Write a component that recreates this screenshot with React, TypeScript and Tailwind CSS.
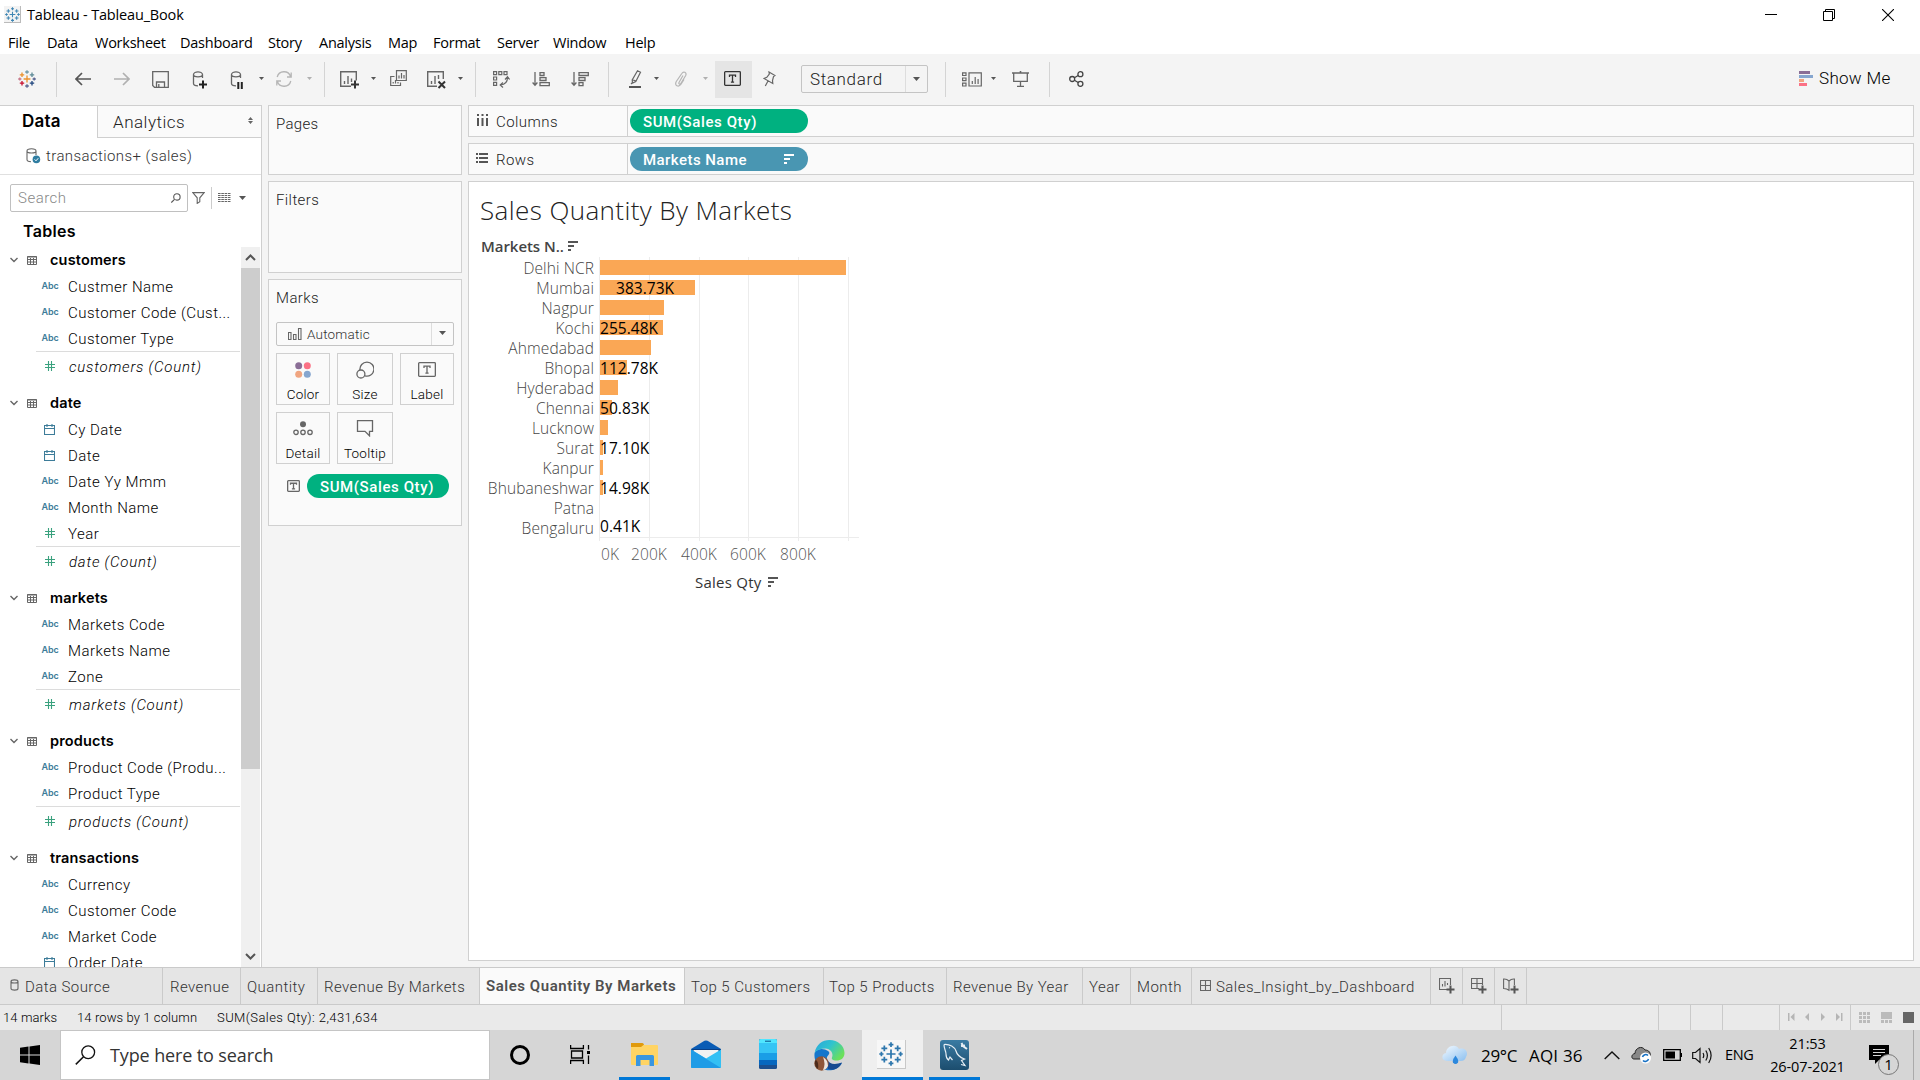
import type { ReactNode } from "react";

const UI = 'font-["Open_Sans","Noto_Sans",sans-serif]';

function Svg({ w, h, children, className = "" }: { w: number; h: number; children: ReactNode; className?: string }) {
  return (
    <svg width={w} height={h} viewBox={`0 0 ${w} ${h}`} fill="none" stroke="#666" strokeWidth="1.3" className={"shrink-0 " + className}>
      {children}
    </svg>
  );
}

function Caret({ color = "#555", s = 5 }: { color?: string; s?: number }) {
  return (
    <Svg w={s} h={Math.ceil(s / 2) + 1}>
      <path d={`M0 0H${s}L${s / 2} ${s / 2 + 0.6}Z`} fill={color} stroke="none" />
    </Svg>
  );
}

function Cell({ w, children, className = "" }: { w: string; children?: ReactNode; className?: string }) {
  return <div className={`flex shrink-0 items-center justify-center ${w} ${className}`}>{children}</div>;
}

function Sep({ w }: { w: string }) {
  return (
    <Cell w={w}>
      <div className="h-[35px] w-px shrink-0 bg-[#d4d4d4]" />
    </Cell>
  );
}

const crosses: [number, number, number, string][] = [
  [9, 9, 3.4, "#eb912c"],
  [4, 4.8, 2.2, "#eb912c"],
  [14, 4.8, 2.2, "#5c8a96"],
  [4, 13.2, 2.2, "#c8102e"],
  [14, 13.2, 2.2, "#1f457e"],
  [9, 2, 1.8, "#7199a6"],
  [9, 16, 1.8, "#5b6591"],
  [1.8, 9, 1.6, "#c7798b"],
  [16.2, 9, 1.6, "#5b6591"],
];

function TableauMark({ size, mono }: { size: number; mono?: string }) {
  return (
    <svg width={size} height={size} viewBox="0 0 18 18" fill="none" strokeWidth="1.3" className="shrink-0">
      {crosses.map(([x, y, r, c], i) => (
        <path key={i} d={`M${x - r} ${y}H${x + r}M${x} ${y - r}V${y + r}`} stroke={mono ?? c} />
      ))}
    </svg>
  );
}

function BoxT({ w = 18, h = 15, color = "#666" }: { w?: number; h?: number; color?: string }) {
  const c = w / 2;
  return (
    <Svg w={w} h={h}>
      <rect x=".65" y=".65" width={w - 1.3} height={h - 1.3} rx=".8" stroke={color} />
      <path d={`M${c - 3} ${h * 0.4}V${h * 0.27}H${c + 3}V${h * 0.4}M${c} ${h * 0.27}V${h * 0.74}M${c - 1.6} ${h * 0.74}H${c + 1.6}`} stroke={color} />
    </Svg>
  );
}

function SortIcon({ color = "#555" }: { color?: string }) {
  return (
    <svg width="10" height="10" className="shrink-0">
      <path d="M0 0H10V2H0ZM0 4H6V6H0ZM0 8H3V10H0Z" fill={color} />
    </svg>
  );
}

const menus: [string, string][] = [
  ["File", "w-[39px]"],
  ["Data", "w-[48px]"],
  ["Worksheet", "w-[85px]"],
  ["Dashboard", "w-[88px]"],
  ["Story", "w-[51px]"],
  ["Analysis", "w-[69px]"],
  ["Map", "w-[45px]"],
  ["Format", "w-[64px]"],
  ["Server", "w-[56px]"],
  ["Window", "w-[72px]"],
  ["Help", "w-[40px]"],
];

function TitleBar() {
  return (
    <header className={`h-[54px] bg-white text-black ${UI}`}>
      <div className="flex h-[29px] items-center">
        <div className="ml-[4px] flex h-[17px] w-[17px] items-center justify-center border-r border-b border-[#bbb] bg-[#f3f3f3]">
          <TableauMark size={15} mono="#3f86b4" />
        </div>
        <span className="ml-[6px] text-[14.5px] tracking-[-0.17px]">Tableau - Tableau_Book</span>
        <div className="flex-1" />
        <Svg w={12} h={12} className="mr-[46px]">
          <path d="M0 5.5H12" stroke="#000" strokeWidth="1" />
        </Svg>
        <Svg w={12} h={12} className="mr-[47px]">
          <path d="M.5 2.5H9.5V11.5H.5ZM2.5 2.5V.5H11.5V9.5H9.5" stroke="#000" strokeWidth="1" />
        </Svg>
        <Svg w={12} h={12} className="mr-[26px]">
          <path d="M0 0L12 12M12 0L0 12" stroke="#000" strokeWidth="1.1" />
        </Svg>
      </div>
      <nav className="flex h-[25px] items-center pt-[3px] pl-[8px] text-[14.5px] tracking-[-0.25px]">
        {menus.map(([m, w]) => (
          <span key={m} className={`shrink-0 whitespace-nowrap ${w}`}>
            {m}
          </span>
        ))}
      </nav>
    </header>
  );
}

function Cylinder() {
  return <path d="M1.5 3.5C1.5 1.8 4 .8 6 .8S10.5 1.8 10.5 3.5V7M1.5 3.5C1.5 5 4 5.8 6 5.8S10.5 5 10.5 3.5M1.5 3.5V12.5C1.5 14 3.5 14.8 6 14.8" />;
}

function Toolbar() {
  return (
    <div className="flex h-[50px] shrink-0 items-center bg-[#f4f4f4]">
      <Cell w="w-[54px]">
        <TableauMark size={18} />
      </Cell>
      <Sep w="w-[4px]" />
      <Cell w="w-[40px]" className="ml-[5px]">
        <Svg w={16} h={14}>
          <path d="M16 7H1M7 1L1 7L7 13" stroke="#555" strokeWidth="1.7" />
        </Svg>
      </Cell>
      <Cell w="w-[38px]">
        <Svg w={16} h={14}>
          <path d="M0 7H15M9 1L15 7L9 13" stroke="#b0b0b0" strokeWidth="1.7" />
        </Svg>
      </Cell>
      <Cell w="w-[40px]" className="pr-[1px]">
        <Svg w={17} h={17}>
          <path d="M.7 .7H16.3V16.3H2.5L.7 14.5ZM4.5 16V11H12.5V16M6.8 13V16" />
        </Svg>
      </Cell>
      <Cell w="w-[36px]">
        <Svg w={17} h={18} className="mt-[2px] ml-[2px]">
          <Cylinder />
          <path d="M7 13.5H15M11 9.5V17.5" stroke="#222" strokeWidth="2" />
        </Svg>
      </Cell>
      <Cell w="w-[42px]" className="pr-[1px]">
        <Svg w={17} h={18} className="mt-[2px] ml-[1px]">
          <Cylinder />
          <path d="M8.3 11V18M11.8 11V18" stroke="#222" strokeWidth="2" />
        </Svg>
      </Cell>
      <Cell w="w-[4px]">
        <Caret />
      </Cell>
      <Cell w="w-[42px]">
        <Svg w={18} h={16}>
          <path d="M2.2 6A7 7 0 0 1 15.6 5.5M15.8 10A7 7 0 0 1 2.4 10.5M16.2 1.5V6H12M1.8 14.5V10H6" stroke="#b5b5b5" />
        </Svg>
      </Cell>
      <Cell w="w-[8px]">
        <Caret color="#b0b0b0" />
      </Cell>
      <Sep w="w-[22px]" />
      <Cell w="w-[28px]">
        <Svg w={20} h={18} className="mt-[2px] ml-[1px]">
          <path d="M11 15.3H.7V.7H16.3V9.5M4.5 10V13M8 5V13M11.5 7.5V11" strokeWidth="1.4" />
          <path d="M11 13.5H19M15 9.5V17.5" stroke="#333" strokeWidth="2" />
        </Svg>
      </Cell>
      <Cell w="w-[20px]">
        <Caret />
      </Cell>
      <Cell w="w-[30px]" className="pb-[2px]">
        <Svg w={18} h={17} className="ml-[1px]">
          <path d="M6.5 .7H16.3V10.5H6.5ZM9 5.5V8.5M11.5 3V8.5M14 5V8.5M4.5 6.5H.7V15.5H10.5V12.5M3.2 12V13.5M5.5 10V13.5M8 12V13.5" strokeWidth="1.2" />
        </Svg>
      </Cell>
      <Cell w="w-[46px]">
        <Svg w={20} h={18} className="mt-[2px] ml-[1px]">
          <path d="M10 15.3H.7V.7H16.3V8M4.5 10V13M8 5V13M11.5 4V8" strokeWidth="1.4" />
          <path d="M11.5 10.5L18 17M18 10.5L11.5 17" stroke="#333" strokeWidth="2" />
        </Svg>
      </Cell>
      <Cell w="w-[2px]">
        <Caret />
      </Cell>
      <Sep w="w-[28px]" />
      <Cell w="w-[24px]">
        <Svg w={17} h={17}>
          <path d="M.6 .6H3.6V3.6H.6ZM5.8 .6H8.8V3.6H5.8ZM11 .6H14V3.6H11ZM.6 6H3.6V9H.6ZM.6 11.4H3.6V14.4H.6ZM14.5 6.5C14.5 11 12 13.5 7.5 14M12 8.5L14.5 5.8L16.6 8.5M10 11.5L7.2 14L10 16.5" strokeWidth="1.2" />
        </Svg>
      </Cell>
      <Cell w="w-[56px]">
        <Svg w={18} h={15}>
          <path d="M3 0V13M.6 10.5L3 13.2L5.4 10.5M8 .7H12V3.5H8ZM8 5.7H14V8.5H8ZM8 10.7H17.3V13.7H8Z" />
        </Svg>
      </Cell>
      <Cell w="w-[22px]">
        <Svg w={18} h={15}>
          <path d="M3 0V13M.6 10.5L3 13.2L5.4 10.5M8 .7H17.3V3.5H8ZM8 5.7H14V8.5H8ZM8 10.7H12V13.7H8Z" />
        </Svg>
      </Cell>
      <Sep w="w-[34px]" />
      <Cell w="w-[20px]">
        <Svg w={13} h={18}>
          <path d="M8.5 .8L11.5 2.3L6.8 11.5L3.5 13L3.2 10ZM3.5 9.5L7 11.3M2 14L4 12" strokeWidth="1.2" />
          <path d="M0 17H12" stroke="#555" strokeWidth="2" />
        </Svg>
      </Cell>
      <Cell w="w-[22px]">
        <Caret />
      </Cell>
      <Cell w="w-[28px]">
        <Svg w={14} h={16}>
          <path d="M9 4.5L5 11.5C4.2 13 6 13.8 6.8 12.5L11.7 4.5C13 1.5 9.5 -.3 7.8 2.5L2.3 10.5C.2 14.5 4.5 16.8 7 13.2L10 8.5" stroke="#b5b5b5" strokeWidth="1.2" />
        </Svg>
      </Cell>
      <Cell w="w-[20px]">
        <Caret color="#b0b0b0" />
      </Cell>
      <Cell w="w-[37px]" className="h-[37px] bg-[#e5e5e5] pr-[2px] pb-[1px]">
        <BoxT w={17} h={15} color="#333" />
      </Cell>
      <Cell w="w-[34px]">
        <Svg w={13} h={16}>
          <path d="M6 1L12 4.5L10.5 5.5L9.5 9.5L9.8 12.5L1 7.5L3.8 6.3L6.3 3ZM5 10L2.3 15" strokeWidth="1.2" />
        </Svg>
      </Cell>
      <div className="ml-[15px] flex h-[28px] w-[127px] shrink-0 items-center rounded-[2px] border border-[#c4c4c4]">
        <span className="w-[103px] shrink-0 pt-[2px] pl-[8px] font-[Roboto] text-[17px] font-light tracking-[0.65px] text-[#222]">Standard</span>
        <div className="flex h-full flex-1 items-center justify-center border-l border-[#ddd]">
          <Caret s={7} />
        </div>
      </div>
      <Sep w="w-[34px]" />
      <Cell w="w-[20px]">
        <Svg w={20} h={15}>
          <path d="M.6 .8H4V3.5H.6ZM.6 6H4V8.7H.6ZM.6 11.2H4V14H.6ZM7 .8H19.3V14H7ZM10.3 9V12M13.2 5V12M16.1 7V12" strokeWidth="1.2" />
        </Svg>
      </Cell>
      <Cell w="w-[22px]">
        <Caret />
      </Cell>
      <Cell w="w-[34px]" className="pr-[1px]">
        <Svg w={17} h={16}>
          <path d="M0 2H17M8.5 0V2" strokeWidth="1.6" />
          <path d="M1.7 2V10.4H15.3V2M8.5 10.4V15.2M5 15.3H12" />
        </Svg>
      </Cell>
      <Sep w="w-[22px]" />
      <Cell w="w-[32px]">
        <Svg w={15} h={16}>
          <circle cx="3.2" cy="8" r="2.5" stroke="#444" />
          <circle cx="11.4" cy="3.2" r="2.5" stroke="#444" />
          <circle cx="11.4" cy="12.8" r="2.5" stroke="#444" />
          <path d="M5.4 6.8L9.2 4.5M5.4 9.2L9.2 11.5" stroke="#444" />
        </Svg>
      </Cell>
      <div className="flex-1" />
      <svg width="14" height="15" className="mb-[1px] shrink-0">
        <path d="M0 0H11V3H0Z" fill="#8a6e96" />
        <path d="M0 4H14V7H0Z" fill="#86a6cf" />
        <path d="M0 8H5V11H0Z" fill="#f0a580" />
        <path d="M0 12H8V15H0Z" fill="#fb7185" />
      </svg>
      <span className="mr-[29px] ml-[6px] w-[72px] font-[Roboto] text-[17px] font-light tracking-[0.3px] whitespace-nowrap text-black">Show Me</span>
    </div>
  );
}

type Field = [kind: "abc" | "cal" | "num", name: string];
const tables: { name: string; fields: Field[]; count?: boolean }[] = [
  { name: "customers", fields: [["abc", "Custmer Name"], ["abc", "Customer Code (Cust..."], ["abc", "Customer Type"]], count: true },
  { name: "date", fields: [["cal", "Cy Date"], ["cal", "Date"], ["abc", "Date Yy Mmm"], ["abc", "Month Name"], ["num", "Year"]], count: true },
  { name: "markets", fields: [["abc", "Markets Code"], ["abc", "Markets Name"], ["abc", "Zone"]], count: true },
  { name: "products", fields: [["abc", "Product Code (Produ..."], ["abc", "Product Type"]], count: true },
  { name: "transactions", fields: [["abc", "Currency"], ["abc", "Customer Code"], ["abc", "Market Code"], ["cal", "Order Date"]] },
];

function FieldIcon({ kind }: { kind: string }) {
  return (
    <div className="ml-[40px] flex w-[20px] shrink-0 items-center justify-center">
      {kind === "abc" && <span className="font-[Inter] text-[9px] font-semibold tracking-[-0.1px] text-[#3d7c99]">Abc</span>}
      {kind === "cal" && (
        <Svg w={11} h={11} className="mr-px">
          <path d="M.5 1.5H10.5V10.5H.5ZM.5 4.5H10.5M3 0V3M8 0V3" stroke="#3d7c99" strokeWidth="1.1" />
        </Svg>
      )}
      {kind === "num" && (
        <Svg w={10} h={10}>
          <path d="M3.5 0V10M6.5 0V10M0 3.5H10M0 6.5H10" stroke="#3aa17e" strokeWidth="1.1" />
        </Svg>
      )}
    </div>
  );
}

function DataPane() {
  return (
    <aside className="flex h-[862px] w-[262px] shrink-0 flex-col overflow-hidden border-t border-r border-[#cfcfcf] bg-white font-[Roboto]">
      <div className="flex h-[32px] shrink-0">
        <div className="w-[97px] pl-[22px] font-[Inter] text-[17px] leading-[31px] font-semibold tracking-[0.2px] text-black">Data</div>
        <div className="flex flex-1 items-center justify-between border-b border-l border-[#cfcfcf] bg-[#fafafa] pr-[8px] pl-[15px] text-[17px] text-[#222]">
          <span className="pt-[2px] font-light tracking-[0.5px]">Analytics</span>
          <Svg w={5} h={7} className="mb-[2px]">
            <path d="M0 3L2.5 0L5 3ZM0 4L2.5 7L5 4Z" fill="#666" stroke="none" />
          </Svg>
        </div>
      </div>
      <div className="flex h-[37px] shrink-0 items-center border-b border-[#e0e0e0] pl-[26px]">
        <Svg w={15} h={16}>
          <path d="M1 3C1 1.5 3.2 .8 5.5 .8S10 1.5 10 3V7M1 3C1 4.5 3.2 5 5.5 5S10 4.5 10 3M1 3V11.5C1 13 2.5 13.7 5 13.7" strokeWidth="1.1" />
          <circle cx="10.4" cy="11.4" r="3.8" fill="#2f7da1" stroke="none" />
          <path d="M8.6 11.4L10 12.8L12.3 10.2" stroke="#fff" strokeWidth="1" />
        </Svg>
        <span className="ml-[5px] text-[15px] font-light tracking-[0.4px] text-[#333]">transactions+ (sales)</span>
      </div>
      <div className="mt-[9px] ml-[10px] flex h-[28px] shrink-0 items-center">
        <div className="flex h-[28px] w-[178px] items-center justify-between rounded-[2px] border border-[#c0c0c0] pr-[6px] pl-[7px]">
          <span className="text-[15px] font-light tracking-[0.5px] text-[#888]">Search</span>
          <Svg w={10} h={10}>
            <circle cx="5.9" cy="3.9" r="3.2" stroke="#555" strokeWidth="1.1" />
            <path d="M3.5 6.3L.3 9.6" stroke="#555" strokeWidth="1.1" />
          </Svg>
        </div>
        <Svg w={13} h={12} className="ml-[4px]">
          <path d="M.8 .6H12.2L7.8 5.8V9.8L5.2 11.4V5.8Z" strokeWidth="1.1" />
        </Svg>
        <div className="ml-[6px] h-[22px] w-px bg-[#ccc]" />
        <svg width="13" height="9" className="mb-[1px] ml-[6px]">
          <path d="M0 .5H13M0 2.5H13M0 4.5H13M0 6.5H13M0 8.5H13" stroke="#666" strokeWidth="1" strokeDasharray="2.6 .7" />
        </svg>
        <div className="ml-[8px]">
          <Caret s={7} />
        </div>
      </div>
      <div className="h-[35px] shrink-0 pl-[23px] font-[Inter] text-[16px] leading-[38px] font-semibold tracking-[0.3px] text-black">Tables</div>
      <div className="flex min-h-0 flex-1">
        <div className="w-[240px] overflow-hidden">
          {tables.map((t) => (
            <div key={t.name} className={t.count ? "mb-[10px]" : ""}>
              <div className="flex h-[26px] items-center">
                <Svg w={8} h={6} className="ml-[10px]">
                  <path d="M.5 1L4 4.5L7.5 1" strokeWidth="1.4" />
                </Svg>
                <Svg w={10} h={9} className="mt-[1px] ml-[9px]">
                  <path d="M.5 .5H9.5V8.5H.5ZM0 1H10M.5 3.5H9.5M.5 6H9.5M3.5 2V8.5M6.5 2V8.5" strokeWidth="1" />
                </Svg>
                <span className="ml-[13px] font-[Inter] text-[14.5px] font-semibold tracking-[0.16px] text-black">{t.name}</span>
              </div>
              {t.fields.map(([k, n]) => (
                <div key={n} className="flex h-[26px] items-center">
                  <FieldIcon kind={k} />
                  <span className="ml-[8px] pt-[2px] text-[15px] font-light tracking-[0.47px] whitespace-nowrap text-black">{n}</span>
                </div>
              ))}
              {t.count && (
                <div>
                  <div className="ml-[36px] h-px bg-[#dcdcdc]" />
                  <div className="flex h-[28px] items-center">
                    <FieldIcon kind="num" />
                    <span className="ml-[9px] pt-[2px] text-[15px] font-light tracking-[0.77px] text-black italic">{t.name} (Count)</span>
                  </div>
                </div>
              )}
            </div>
          ))}
        </div>
        <div className="ml-[1px] flex w-[19px] flex-col items-center justify-between bg-[#f0f0f0]">
          <div className="flex h-[21px] items-center">
            <Svg w={11} h={7}>
              <path d="M1 6L5.5 1.5L10 6" stroke="#555" strokeWidth="2" />
            </Svg>
          </div>
          <div className="h-[501px] w-full bg-[#cdcdcd]" />
          <div className="flex flex-1 items-end pb-[7px]">
            <Svg w={11} h={7}>
              <path d="M1 1L5.5 5.5L10 1" stroke="#555" strokeWidth="2" />
            </Svg>
          </div>
        </div>
      </div>
    </aside>
  );
}

function MarkButton({ label, w, children }: { label: string; w: string; children: ReactNode }) {
  return (
    <div className={`flex h-[52px] flex-col items-center border border-[#d0d0d0] bg-[#fafafa] ${w}`}>
      <div className="flex h-[32px] items-center">{children}</div>
      <span className="text-[13.5px] leading-[17px] font-light tracking-[0.25px] text-black">{label}</span>
    </div>
  );
}

function Cards() {
  return (
    <section className="ml-[6px] flex w-[194px] shrink-0 flex-col gap-[6px] font-[Roboto] text-[15px] font-light text-[#222]">
      <div className="h-[70px] border border-[#d0d0d0] bg-[#fafafa] px-[7px] pt-[7px] tracking-[0.3px]">Pages</div>
      <div className="h-[92px] border border-[#d0d0d0] bg-[#fafafa] px-[7px] pt-[7px] tracking-[0.4px]">Filters</div>
      <div className="h-[247px] border border-[#d0d0d0] bg-[#fafafa] px-[7px] pt-[7px]">
        <div className="tracking-[0.4px]">Marks</div>
        <div className="mt-[12px] flex h-[24px] w-[178px] items-center rounded-[2px] border border-[#c4c4c4]">
          <Svg w={14} h={12} className="ml-[11px]">
            <path d="M.5 4.5H3V11.5H.5ZM5.5 6.5H8V11.5H5.5ZM10.5 .5H13V11.5H10.5Z" strokeWidth="1.1" />
          </Svg>
          <span className="ml-[5px] flex-1 pt-[1px] text-[13.5px] tracking-[0.2px] text-[#333]">Automatic</span>
          <div className="flex h-full w-[22px] items-center justify-center border-l border-[#ddd]">
            <Caret s={7} />
          </div>
        </div>
        <div className="mt-[7px] flex flex-wrap gap-x-[7px] gap-y-[7px]">
          <MarkButton label="Color" w="w-[54px]">
            <svg width="16" height="16">
              <circle cx="3.7" cy="3.7" r="3.5" fill="#8a6e96" />
              <circle cx="12.3" cy="3.7" r="3.5" fill="#fb7185" />
              <circle cx="3.7" cy="12.3" r="3.5" fill="#f0a580" />
              <circle cx="12.3" cy="12.3" r="3.5" fill="#86a6cf" />
            </svg>
          </MarkButton>
          <MarkButton label="Size" w="w-[56px]">
            <Svg w={18} h={18}>
              <path d="M4 9A7 7 0 1 1 9 14.8" />
              <circle cx="4.9" cy="13" r="4" />
            </Svg>
          </MarkButton>
          <MarkButton label="Label" w="w-[54px]">
            <BoxT w={18} h={15} />
          </MarkButton>
          <MarkButton label="Detail" w="w-[54px]">
            <Svg w={20} h={15}>
              <circle cx="10" cy="3.3" r="3" fill="#666" stroke="none" />
              <circle cx="3" cy="11.3" r="2.2" />
              <circle cx="10" cy="11.3" r="2.2" />
              <circle cx="17" cy="11.3" r="2.2" />
            </Svg>
          </MarkButton>
          <MarkButton label="Tooltip" w="w-[56px]">
            <Svg w={18} h={17}>
              <path d="M1.5 .7H16.5V11.3H13.5V15.8L9 11.3H1.5Z" />
            </Svg>
          </MarkButton>
        </div>
        <div className="mt-[10px] flex items-center pl-[11px]">
          <BoxT w={13} h={12} />
          <div className="ml-[7px] h-[24px] w-[142px] rounded-full bg-[#00b180] pl-[13px] text-[15px] leading-[26px] font-medium tracking-[0.6px] text-white">SUM(Sales Qty)</div>
        </div>
      </div>
    </section>
  );
}

function Shelf({ label, icon, children }: { label: string; icon: ReactNode; children: ReactNode }) {
  return (
    <div className="flex h-[32px] shrink-0 items-center border border-[#d0d0d0] bg-[#fafafa]">
      <div className="flex h-full w-[159px] items-center border-r border-[#d0d0d0] pl-[7px]">
        <div className="w-[13px]">{icon}</div>
        <span className="ml-[7px] pt-[2px] text-[15px] font-light tracking-[0.45px] text-[#222]">{label}</span>
      </div>
      {children}
    </div>
  );
}

const markets: { name: string; bar: number; label?: string }[] = [
  { name: "Delhi NCR", bar: 246 },
  { name: "Mumbai", bar: 95, label: "383.73K" },
  { name: "Nagpur", bar: 64 },
  { name: "Kochi", bar: 63, label: "255.48K" },
  { name: "Ahmedabad", bar: 51 },
  { name: "Bhopal", bar: 27, label: "112.78K" },
  { name: "Hyderabad", bar: 18 },
  { name: "Chennai", bar: 12, label: "50.83K" },
  { name: "Lucknow", bar: 8 },
  { name: "Surat", bar: 3, label: "17.10K" },
  { name: "Kanpur", bar: 3 },
  { name: "Bhubaneshwar", bar: 3, label: "14.98K" },
  { name: "Patna", bar: 0 },
  { name: "Bengaluru", bar: 0, label: "0.41K" },
];

function Viz() {
  return (
    <div className="flex-1 border border-[#d0d0d0] bg-white font-['Open_Sans']">
      <h1 className="mt-[9px] h-[37px] pl-[11px] text-[26px] leading-[38px] font-light tracking-[0.4px] text-[#222]">Sales Quantity By Markets</h1>
      <div className="mt-[7px] flex h-[21px] items-center pt-[1px] pl-[12px] text-[15px] font-semibold text-[#444]">
        <span className="w-[87px] tracking-[-0.05px] whitespace-nowrap">Markets N..</span>
        <SortIcon />
      </div>
      <div className="relative h-[285px] w-[400px]">
        <svg width="400" height="285" className="absolute top-0 left-0" shapeRendering="crispEdges">
          <path d="M130.5 1V285M180.5 1V285M230.5 1V285M279.5 1V285M329.5 1V285M379.5 1V285M130 281.5H390" stroke="#ececec" />
        </svg>
        <div className="relative pt-[1px]">
          {markets.map((m) => (
            <div key={m.name} className="flex h-[20px] items-center">
              <span className="w-[125px] shrink-0 pt-[2px] text-right text-[15.5px] leading-[18px] font-light tracking-[0.1px] whitespace-nowrap text-[#444]">{m.name}</span>
              <div className="relative ml-[6px] flex h-[20px] items-center">
                <div className="h-[15px] bg-[#faa755]" style={{ width: m.bar }} />
                {m.label && (
                  <span
                    className={`absolute left-0 text-[15.5px] leading-[20px] font-medium tracking-[0.04px] whitespace-nowrap text-black ${m.name === "Mumbai" ? "pl-[16px]" : ""} ${m.bar ? "top-px" : "top-[-1px]"}`}
                  >
                    {m.label}
                  </span>
                )}
              </div>
            </div>
          ))}
        </div>
      </div>
      <div className="mt-[3px] flex h-[22px] items-center pl-[132px] text-[15.5px] font-light tracking-[0.1px] whitespace-nowrap text-[#555]">
        <span className="w-[30px]">0K</span>
        <span className="w-[50px]">200K</span>
        <span className="w-[49px]">400K</span>
        <span className="w-[50px]">600K</span>
        <span className="w-[50px]">800K</span>
      </div>
      <div className="mt-[5px] flex h-[22px] items-center pl-[226px] text-[15px] font-medium tracking-[0.25px] text-[#333]">
        <span className="w-[73px]">Sales Qty</span>
        <SortIcon />
      </div>
    </div>
  );
}

function Workspace() {
  return (
    <main className="ml-[6px] flex h-[856px] w-[1446px] shrink-0 flex-col gap-[6px] font-[Roboto]">
      <Shelf
        label="Columns"
        icon={
          <svg width="11" height="13" className="mb-[2px] ml-px">
            <path d="M1 0V2M1 4V12M5.5 0V2M5.5 4V12M10 0V2M10 4V12" stroke="#555" strokeWidth="2" />
          </svg>
        }
      >
        <div className="ml-[2px] h-[24px] w-[178px] rounded-full bg-[#00b180] pl-[13px] text-[15px] leading-[26px] font-medium tracking-[0.6px] text-white">SUM(Sales Qty)</div>
      </Shelf>
      <Shelf
        label="Rows"
        icon={
          <svg width="12" height="10" className="mb-[2px]">
            <path d="M0 1H2M3 1H12M0 5H2M3 5H12M0 9H2M3 9H12" stroke="#555" strokeWidth="2" />
          </svg>
        }
      >
        <div className="ml-[2px] flex h-[24px] w-[178px] items-center justify-between rounded-full bg-[#4996b2] pr-[14px] pl-[13px] text-[15px] font-medium tracking-[0.45px] text-white">
          <span className="pt-[2px]">Markets Name</span>
          <SortIcon color="#fff" />
        </div>
      </Shelf>
      <Viz />
    </main>
  );
}

const tabs: [string, string, string][] = [
  ["Revenue", "w-[78px]", "pl-[7px]"],
  ["Quantity", "w-[77px]", "pl-[6px]"],
  ["Revenue By Markets", "w-[162px]", "pl-[6px]"],
  ["Sales Quantity By Markets", "w-[205px]", "pl-[6px]"],
  ["Top 5 Customers", "w-[139px]", "pl-[6px]"],
  ["Top 5 Products", "w-[123px]", "pl-[5px]"],
  ["Revenue By Year", "w-[136px]", "pl-[6px]"],
  ["Year", "w-[48px]", "pl-[6px]"],
  ["Month", "w-[61px]", "pl-[6px]"],
];

const newSheetIcons = [
  "M8 11.5H.5V.5H11.5V7M3.5 6V8.5M6 3V8.5M8.5 5V7",
  "M8 10.5H.5V.5H11.5V7M6 .5V10.5M.5 5.5H11.5",
  "M6 3C4.5 1.5 2.5 .8 .6 1V10.5C2.5 10.5 4.5 11 6 12.2V3C7.5 1.5 9.5 .8 11.4 1V7",
];

function SheetTabs() {
  return (
    <div className="flex h-[38px] shrink-0 items-stretch border-t border-b border-[#cacaca] bg-[#e5e5e5] font-[Roboto] text-[15px] font-light tracking-[0.43px] text-[#333]">
      <div className="flex w-[163px] items-center border-r border-[#cacaca] pl-[10px]">
        <Svg w={9} h={12} className="mb-[2px]">
          <path d="M1 2.5C1 .3 8 .3 8 2.5V9.5C8 11.7 1 11.7 1 9.5ZM1 2.5C1 4.5 8 4.5 8 2.5" strokeWidth="1.1" />
        </Svg>
        <span className="ml-[6px] pt-[2px]">Data Source</span>
      </div>
      {tabs.map(([t, w, p]) => (
        <div
          key={t}
          className={`flex shrink-0 items-center border-r border-[#cacaca] whitespace-nowrap ${w} ${p} ${t.startsWith("Sales") ? "bg-[#fafafa] font-semibold tracking-[0.54px] text-[#505050]" : "pt-[2px]"}`}
        >
          {t}
        </div>
      ))}
      <div className="flex w-[239px] items-center border-r border-[#cacaca] pl-[8px]">
        <Svg w={11} h={11} className="mb-[2px]">
          <path d="M.5 .5H10.5V10.5H.5ZM5.5 .5V10.5M.5 5.5H10.5" strokeWidth="1.1" />
        </Svg>
        <span className="ml-[5px] pt-[2px] tracking-[0.46px]">Sales_Insight_by_Dashboard</span>
      </div>
      {newSheetIcons.map((d) => (
        <div key={d} className="flex w-[32px] items-center justify-center border-r border-[#cacaca]">
          <Svg w={16} h={16}>
            <path d={d} strokeWidth="1.1" />
            <path d="M7.5 11.5H15.5M11.5 7.5V15.5" stroke="#555" strokeWidth="2" />
          </Svg>
        </div>
      ))}
    </div>
  );
}

function StatusBar() {
  const line = "h-full border-l border-[#cacaca]";
  return (
    <div className="flex h-[25px] shrink-0 items-center bg-[#eaeaea] pl-[3px] font-[Roboto] text-[13px] font-light tracking-[0.1px] whitespace-nowrap text-black">
      <span className="w-[74px]">14 marks</span>
      <span className="w-[140px]">14 rows by 1 column</span>
      <span className="w-[1284px] tracking-[0.42px]">SUM(Sales Qty): 2,431,634</span>
      <div className={`w-[157px] ${line}`} />
      <div className={`w-[32px] ${line}`} />
      <div className={`w-[32px] ${line}`} />
      <div className={`w-[57px] ${line}`} />
      <div className={`flex w-[71px] items-center pl-[8px] ${line}`}>
        <svg width="56" height="9">
          <path d="M0 0H1.5V8H0ZM6.5 0V8L2.5 4ZM21 0V8L17 4ZM33 0V8L37 4ZM48 0V8L52 4ZM53 0H54.5V8H53Z" fill="#b5b5b5" />
        </svg>
      </div>
      <div className={`flex w-[70px] items-center pb-[1px] pl-[8px] ${line}`}>
        <svg width="56" height="11">
          <path d="M0 0H3V3H0ZM4 0H7V3H4ZM8 0H11V3H8ZM0 4H3V7H0ZM4 4H7V7H4ZM8 4H11V7H8ZM0 8H3V11H0ZM4 8H7V11H4ZM8 8H11V11H8ZM22 0H33V7H22ZM22 8H25V11H22ZM26 8H29V11H26ZM30 8H33V11H30Z" fill="#bbb" />
          <path d="M44 0H55V11H44Z" fill="#666" />
        </svg>
      </div>
    </div>
  );
}

function AppSlot({ w, active, open, children }: { w: string; active?: boolean; open?: boolean; children: ReactNode }) {
  return (
    <div className={`flex h-[50px] shrink-0 flex-col items-center ${w} ${active ? "bg-[#efefef]" : ""}`}>
      <div className="flex h-[47px] items-center">{children}</div>
      {(active || open) && <div className={`h-[3px] bg-[#0078d7] ${active ? "w-full" : "w-[51px]"}`} />}
    </div>
  );
}

function Taskbar() {
  return (
    <footer className={`flex h-[50px] shrink-0 items-start bg-[#d6d6d6] text-black ${UI}`}>
      <div className="flex h-full w-[60px] items-center justify-center">
        <svg width="20" height="20">
          <path d="M0 2.8L8.5 1.6V9.5H0ZM9.5 1.4L20 0V9.5H9.5ZM0 10.5H8.5V18.4L0 17.2ZM9.5 10.5H20V20L9.5 18.6Z" fill="#000" />
        </svg>
      </div>
      <div className="flex h-[50px] w-[430px] items-center border border-[#c5c5c5] bg-white pl-[14px]">
        <Svg w={21} h={20}>
          <circle cx="13.2" cy="7.2" r="6.4" stroke="#111" />
          <path d="M8.5 11.8L.8 19.4" stroke="#111" strokeWidth="1.5" />
        </Svg>
        <span className="ml-[14px] text-[18px] tracking-[-0.12px] text-[#333]">Type here to search</span>
      </div>
      <AppSlot w="w-[60px]">
        <div className="mt-[3px] h-[20px] w-[20px] rounded-full border-[3px] border-black" />
      </AppSlot>
      <AppSlot w="w-[60px]">
        <Svg w={21} h={19} className="mt-[2px]">
          <path d="M.6 0V3.5H13.4V0M.6 19V15.5H13.4V19M1.5 6H12.5V13H1.5ZM18.5 0V4.5M18.5 10.5V19" stroke="#000" />
          <path d="M17 6H20V9H17Z" fill="#000" stroke="none" />
        </Svg>
      </AppSlot>
      <AppSlot w="w-[69px]" open>
        <svg width="27" height="23" className="mt-[1px] mr-[1px]">
          <path d="M0 0H11.5Q13 .3 13 2V4H0Z" fill="#e09a0c" />
          <path d="M0 4H10L12.500 2H26Q27 2 27 3V21Q27 22 26 22H1Q0 22 0 21Z" fill="#ffd464" />
          <path d="M5 23V13.500Q5 12 6.500 12H21.500Q23 12 23 13.500V23H18.500V17H9.500V23Z" fill="#3a96e0" />
        </svg>
      </AppSlot>
      <AppSlot w="w-[54px]">
        <svg width="30" height="28" className="mt-[1px]">
          <path d="M0 9L13.500 .8Q15 0 16.500 .8L30 9V12H0Z" fill="#0a5cb5" />
          <path d="M0 9H30V12H0Z" fill="#0b3f85" />
          <path d="M2.500 10H27.500V14L15 20L2.500 14Z" fill="#f2f2f2" />
          <path d="M0 9.500L15 18.500L30 9.500V27Q30 28 29 28H1Q0 28 0 27Z" fill="#33c0f4" />
          <path d="M0 9.500L30 28H1Q0 28 0 27Z" fill="#1f9ce6" />
        </svg>
      </AppSlot>
      <AppSlot w="w-[70px]">
        <svg width="18" height="30">
          <rect width="18" height="30" rx="1.5" fill="#1b4f8f" />
          <path d="M0 4H18V14H0Z" fill="#36c5f5" />
          <path d="M0 14H18V21H0Z" fill="#1a9ee6" />
          <path d="M0 21H18V26H0Z" fill="#0667bf" />
          <path d="M0 4V1.5Q0 0 1.5 0H16.5Q18 0 18 1.5V4Z" fill="#50e6ff" />
          <path d="M6 2.2H12" stroke="#0a4f8a" />
        </svg>
      </AppSlot>
      <AppSlot w="w-[54px]">
        <svg width="31" height="31" className="mt-[3px] mr-[2px]">
          <defs>
            <linearGradient id="edgeTop" x1="0" y1="0" x2="1" y2=".6">
              <stop offset="0" stopColor="#2aa5dc" />
              <stop offset=".5" stopColor="#2fc3cf" />
              <stop offset="1" stopColor="#6be05a" />
            </linearGradient>
          </defs>
          <path d="M.6 13C3 8 10 8 14 11C17 13 14 15 13 17C12 24 19 27 28 23C24 30 17 31 12 30C4 28-.5 21 .6 13Z" fill="#1576cc" />
          <path d="M.6 13C2 4.500 8.500 0 15.500 0C24 0 30.500 6 30.500 13C30.500 18 27 20.500 22.500 20.500C18.500 20.500 17.200 19 18 17.500C20 13 16 8.500 11.500 8.500C6.500 8.500 2.500 10 .6 13Z" fill="url(#edgeTop)" />
          <path d="M13 19C15 24.500 21 25 28 22.500C25 29 19 31 14 29Z" fill="#164a91" />
          <circle cx="7.500" cy="23.500" r="7.200" fill="#8f5638" />
          <path d="M9 17Q14 20 14 26Q12 30 9 30Q12 24 9 17Z" fill="#ece6df" />
          <path d="M2 20Q5 22 4 29Q0 26 1 21Z" fill="#4d2b1b" />
        </svg>
      </AppSlot>
      <div className="w-[5px]" />
      <AppSlot w="w-[61px]" active>
        <div className="mt-[2px] mr-[2px] flex h-[29px] w-[29px] items-center justify-center border-r border-b border-[#c8c8c8] bg-[#f7f7f7]">
          <TableauMark size={24} mono="#2e77ad" />
        </div>
      </AppSlot>
      <AppSlot w="w-[63px]" open>
        <svg width="29" height="30" className="mt-[2px]" fill="none" stroke="#e6eef4">
          <defs>
            <linearGradient id="wb" x1="0" y1="0" x2="0" y2="1">
              <stop offset="0" stopColor="#3a7ba3" />
              <stop offset="1" stopColor="#1c4d6e" />
            </linearGradient>
          </defs>
          <rect width="29" height="30" rx="3" fill="url(#wb)" stroke="none" />
          <path d="M4 4.5C10 4 14.5 7 16 11C17 15 19 17 24.5 19L21.5 20.5L25 25.5L21 24.5M4 4.5C4 9 6 11 6 14C6 17 7 19 8.5 20L10 17L12.5 20M9 7.5L10 8" strokeWidth="1.2" />
          <path d="M21.5 3L23 6L27 9M21 6L25 5.5" strokeWidth="2" />
        </svg>
      </AppSlot>
      <div className="flex-1" />
      <div className="flex h-full w-[471px] items-center whitespace-nowrap">
        <svg width="26" height="20" className="ml-[-7px] shrink-0">
          <defs>
            <linearGradient id="cloud" x1="0" y1="0" x2="1" y2="1">
              <stop offset="0" stopColor="#f4faff" />
              <stop offset="1" stopColor="#8cc0f0" />
            </linearGradient>
          </defs>
          <path d="M5 16C-1 16-1 9 4 8C4 1 14-2 17 4C23 2 27 7 24 12C23 15 21 16 19 16Z" fill="url(#cloud)" />
          <path d="M13.5 10.5Q17 15 16 17.5Q13.5 20.5 11 17.5Q10 15 13.5 10.5Z" fill="#2c88dd" />
        </svg>
        <span className="ml-[13px] w-[48px] shrink-0 pt-[1px] text-[17px] tracking-[-0.3px]">29°C</span>
        <span className="w-[75px] shrink-0 pt-[1px] text-[17px] tracking-[0.2px]">AQI 36</span>
        <Svg w={16} h={9}>
          <path d="M.7 8L8 1L15.3 8" stroke="#111" strokeWidth="1.4" />
        </Svg>
        <svg width="22" height="18" className="ml-[11px] shrink-0">
          <path d="M3 13C0 13 0 8 4 7.5C4 2 11-1 14 4C18 4 20 7 19 10L11 13Z" fill="#888" stroke="#222" />
          <circle cx="14.5" cy="12" r="5.5" fill="#fff" />
          <path d="M11.5 11A3.3 3.3 0 0 1 17 9.5M17.5 13A3.3 3.3 0 0 1 12 14.5" stroke="#1570c4" strokeWidth="1.6" fill="none" />
        </svg>
        <svg width="19" height="12" className="ml-[10px] shrink-0">
          <path d="M.7 .7H17.3V11.3H.7Z" fill="none" stroke="#000" strokeWidth="1.3" />
          <path d="M2.5 2.5H12V9.5H2.5ZM17.5 4H19V8H17.5Z" fill="#000" />
        </svg>
        <Svg w={21} h={17} className="ml-[10px]">
          <path d="M.7 5.5H3.5L8 1.5V15.5L3.5 11.5H.7ZM11 6Q12.5 8.5 11 11M13.8 3.5Q17 8.5 13.8 13.5M16.7 1Q21.5 8.5 16.7 16" stroke="#111" strokeWidth="1.2" />
        </Svg>
        <span className="ml-[12px] w-[44px] shrink-0 text-[14.5px] tracking-[-0.3px]">ENG</span>
        <div className="w-[77px] shrink-0 text-center text-[14.5px] leading-[23px] tracking-[-0.1px]">
          <div>21:53</div>
          <div>26-07-2021</div>
        </div>
        <div className="relative ml-[23px] h-[50px] w-[45px] shrink-0 border-r border-[#aaa]">
          <svg width="20" height="19" className="absolute top-[15px] left-0">
            <path d="M0 0H20V15H10L6 19V15H0Z" fill="#000" />
            <path d="M4 4.5H16M4 7.5H16M4 10.5H12" stroke="#d6d6d6" strokeWidth="1" />
          </svg>
          <div className="absolute top-[24px] left-[9px] flex h-[21px] w-[21px] items-center justify-center rounded-full border border-[#777] bg-[#d6d6d6] text-[15px]">1</div>
        </div>
      </div>
    </footer>
  );
}

export default function App() {
  return (
    <div className="flex h-[1080px] w-[1920px] flex-col overflow-hidden bg-[#f4f4f4]">
      <TitleBar />
      <Toolbar />
      <div className="flex h-[863px] shrink-0 pt-px">
        <DataPane />
        <Cards />
        <Workspace />
      </div>
      <SheetTabs />
      <StatusBar />
      <Taskbar />
    </div>
  );
}
